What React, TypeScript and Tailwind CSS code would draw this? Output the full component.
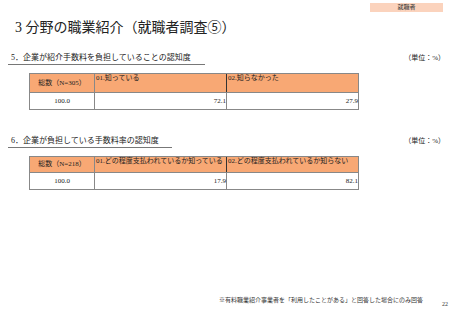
import React from "react";

interface Row {
  total: string;
  value1: string;
  value2: string;
}
interface SectionProps {
  title: string;
  lineWidth: string;
  headerHeight: string;
  labels: [string, string];
  row: Row;
}

const serif = { fontFamily: '"Liberation Serif", "Noto Sans CJK JP", serif' };

const Section = ({ title, lineWidth, headerHeight, labels, row }: SectionProps) => {
  return (
    <div>
      <div className="flex justify-between items-end pl-[8px] pr-[8px]">
        <div className={`${lineWidth} border-b border-[#777] text-[8px] leading-[10px] pl-[3px] pb-[1px] text-[#222]`}>
          {title}
        </div>
        <div className="text-[7px] leading-[10px] text-[#222] pb-[2px]">（単位：%）</div>
      </div>
      <table className="ml-[29px] mt-[8px] w-[330px] border-collapse border border-[#888] text-[7px] text-[#222]">
        <tbody>
          <tr className={`${headerHeight} bg-[#f8a874]`}>
            <td className="w-[65px] border border-[#888] text-center align-middle">{`総数（N=${row.total}）`}</td>
            <td className="w-[132px] border-l border-l-[#333] border-y border-y-[#888] align-top leading-[9px] pl-[1px]">
              {labels[0]}
            </td>
            <td className="w-[132px] border-l border-l-[#333] border-y border-y-[#888] align-top leading-[9px] pl-[1px]">
              {labels[1]}
            </td>
          </tr>
          <tr className="h-[17px] bg-white">
            <td className="border border-[#888] text-center">100.0</td>
            <td className="border border-[#888] text-right">{row.value1}</td>
            <td className="border border-[#888] text-right">{row.value2}</td>
          </tr>
        </tbody>
      </table>
    </div>
  );
};

const App = () => {
  return (
    <div className="w-[453px] h-[320px] bg-white flex flex-col overflow-hidden" style={serif}>
      <div className="flex justify-end pt-[3px] pr-[10px]">
        <div className="w-[73px] h-[9px] bg-[#fbd3bd] text-[6px] leading-[9px] text-center text-[#333]">就職者</div>
      </div>
      <div className="pl-[15px] mt-[7px] text-[14px] leading-[18px] text-[#222]">3 分野の職業紹介（就職者調査⑤）</div>

      <div className="mt-[16px]">
        <Section
          title="5．企業が紹介手数料を負担していることの認知度"
          lineWidth="w-[197px]"
          headerHeight="h-[19px]"
          labels={["01.知っている", "02.知らなかった"]}
          row={{ total: "305", value1: "72.1", value2: "27.9" }}
        />
      </div>

      <div className="mt-[26px]">
        <Section
          title="6．企業が負担している手数料率の認知度"
          lineWidth="w-[164px]"
          headerHeight="h-[16px]"
          labels={["01.どの程度支払われているか知っている", "02.どの程度支払われているか知らない"]}
          row={{ total: "218", value1: "17.9", value2: "82.1" }}
        />
      </div>

      <div className="mt-auto flex justify-end items-end pb-[12px] pr-[5px]">
        <div className="text-[6px] leading-[8px] text-[#333] mb-[4px]">
          ※有料職業紹介事業者を「利用したことがある」と回答した場合にのみ回答
        </div>
        <div className="ml-[19px] text-[6px] leading-[8px] text-[#333]">22</div>
      </div>
    </div>
  );
};

export default App;
